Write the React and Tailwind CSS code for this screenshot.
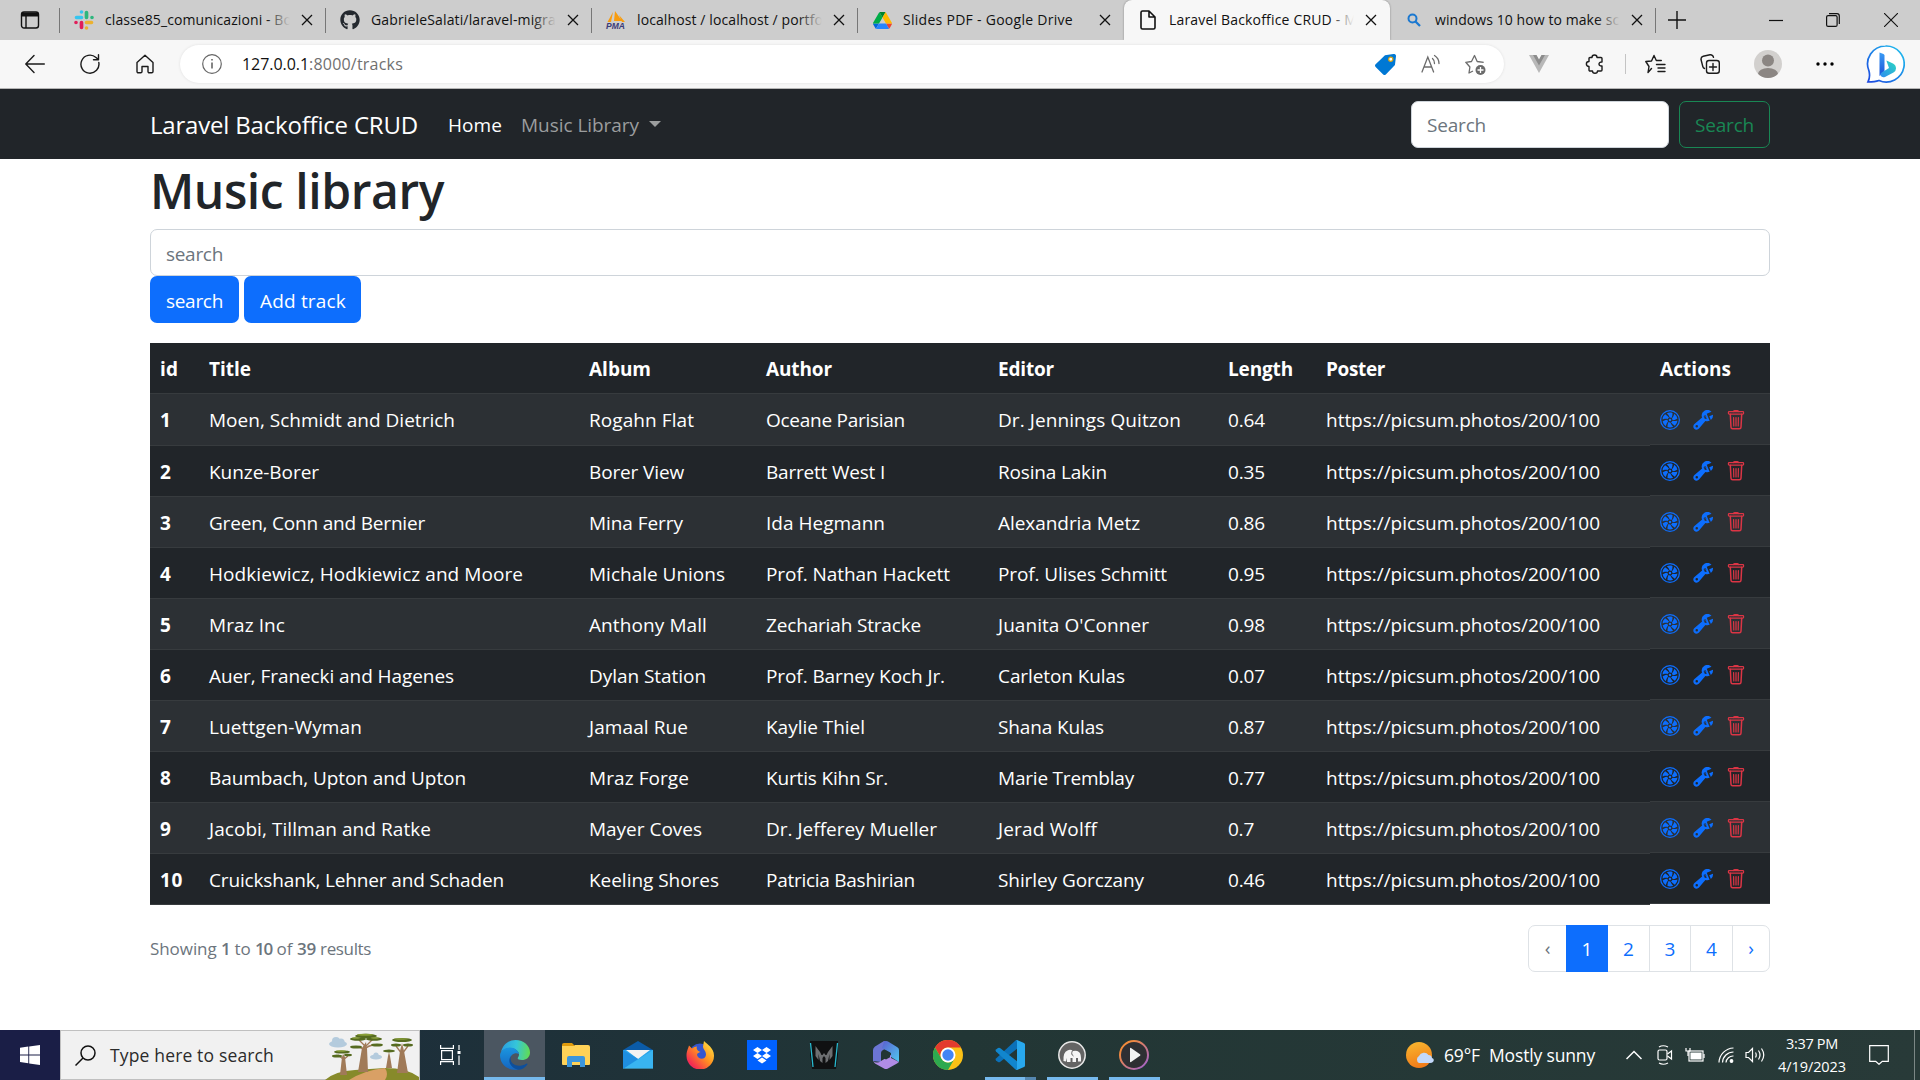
import React, { useLayoutEffect, useRef, useState } from "react";
import { BsFan, BsWrenchAdjustable } from "react-icons/bs";
import { FaGithub } from "react-icons/fa";

/* Text set to a given advance width by adjusting its tracking. */
function Fit({ w, className = "", children }) {
  const ref = useRef(null);
  const [ls, setLs] = useState(0);
  useLayoutEffect(() => {
    const n = ref.current.textContent.length;
    setLs((w - ref.current.getBoundingClientRect().width) / n);
  }, [w]);
  return (
    <span ref={ref} className={"inline-block whitespace-pre shrink-0 " + className} style={{ letterSpacing: ls + "px" }}>
      {children}
    </span>
  );
}

const Close = ({ className = "" }) => (
  <svg viewBox="0 0 12 12" className={"size-3 shrink-0 " + className} fill="none" stroke="#111" strokeWidth="1.3">
    <path d="M1 1l10 10M11 1L1 11" />
  </svg>
);

const Slack = () => (
  <svg viewBox="0 0 24 24" className="size-5">
    <g strokeWidth="4.4" strokeLinecap="round" fill="none">
      <path d="M9 2.4v0M3 9h6" stroke="#36c5f0" />
      <path d="M15 3v6M21.6 9v0" stroke="#2eb67d" />
      <path d="M15 15h6M15 21.6v0" stroke="#ecb22e" />
      <path d="M9 15v6M2.4 15v0" stroke="#e01e5a" />
    </g>
  </svg>
);
const Pma = () => (
  <svg viewBox="0 0 20 20" className="size-5 overflow-visible">
    <path d="M7 2L5 12H1.5zM9 1l7 10H8zM13 5l6 7h-3z" fill="#f89c0e" />
    <text x="0" y="18.5" fontSize="8.5" fontWeight="bold" fontStyle="italic" fontFamily="Liberation Sans, sans-serif" fill="#3b3b78">PMA</text>
  </svg>
);
const Drive = () => (
  <svg viewBox="0 0 87.3 78" className="w-[19px] h-[17px]">
    <path d="m6.6 66.85 3.85 6.65c.8 1.4 1.95 2.5 3.3 3.3l13.75-23.8h-27.5c0 1.55.4 3.1 1.2 4.5z" fill="#0066da" />
    <path d="m43.65 25-13.75-23.8c-1.35.8-2.5 1.9-3.3 3.3l-25.4 44a9.06 9.06 0 0 0 -1.2 4.5h27.5z" fill="#00ac47" />
    <path d="m73.55 76.8c1.35-.8 2.5-1.9 3.3-3.3l1.6-2.75 7.65-13.25c.8-1.4 1.2-2.95 1.2-4.5h-27.5l5.85 11.5z" fill="#ea4335" />
    <path d="m43.65 25 13.75-23.8c-1.35-.8-2.9-1.2-4.5-1.2h-18.5c-1.6 0-3.15.45-4.5 1.2z" fill="#00832d" />
    <path d="m59.8 53h-32.3l-13.75 23.8c1.35.8 2.9 1.2 4.5 1.2h50.8c1.6 0 3.15-.45 4.5-1.2z" fill="#2684fc" />
    <path d="m73.4 26.5-12.7-22c-.8-1.4-1.95-2.5-3.3-3.3l-13.75 23.8 16.15 28h27.45c0-1.55-.4-3.1-1.2-4.5z" fill="#ffba00" />
  </svg>
);
const Page = () => (
  <svg viewBox="0 0 16 20" className="w-4 h-5" fill="none" stroke="#111" strokeWidth="1.6" strokeLinejoin="round">
    <path d="M3 1h6l6 6v10.5a1.5 1.5 0 0 1-1.5 1.5H2.5A1.5 1.5 0 0 1 1 17.500V2.500A1.500 1.500 0 0 1 2.500 1zM9 1v6h6" />
  </svg>
);
const Magnifier = () => (
  <svg viewBox="0 0 14 14" className="size-3.5" fill="none" stroke="#1b78d0" strokeWidth="2">
    <circle cx="5.500" cy="5.500" r="4" />
    <path d="M8.500 8.500l4.500 4.500" strokeWidth="2.300" />
  </svg>
);

const tabs = [
  { icon: <Slack />, text: "classe85_comunicazioni - Bo", w: 187, fade: true, sep: true },
  { icon: <FaGithub className="size-5 text-[#24292f]" />, text: "GabrieleSalati/laravel-migrat", w: 190, fade: true, sep: true },
  { icon: <Pma />, text: "localhost / localhost / portfo", w: 186, fade: true, sep: true },
  { icon: <Drive />, text: "Slides PDF - Google Drive", w: 170, sep: false },
  { icon: <Page />, text: "Laravel Backoffice CRUD - M", w: 188, fade: true, active: true },
  { icon: <Magnifier />, text: "windows 10 how to make scr", w: 190, fade: true, sep: true },
];

function TabStrip() {
  return (
    <div className="flex h-10 bg-[#cdcdcd]">
      <div className="flex w-[60px] items-center justify-end">
        <svg viewBox="0 0 20 20" className="mr-[19px] size-5 shrink-0" fill="none" stroke="#111" strokeWidth="1.400">
          <rect x="1.500" y="2" width="17" height="16" rx="2.500" />
          <path d="M2 4.500h16" strokeWidth="4" />
          <path d="M6 6v12" />
        </svg>
        <span className="h-[25px] w-px bg-[#777]" />
      </div>
      {tabs.map((t) => (
        <div
          key={t.text}
          className={
            "flex w-[266px] shrink-0 items-center " +
            (t.active ? "rounded-t-lg bg-[#f7f7f7] shadow-[0_0_2px_rgba(0,0,0,0.4)]" : "")
          }
        >
          <span className="ml-3 flex w-6 shrink-0 justify-center">{t.icon}</span>
          <span className="relative ml-[9px] w-[185px] shrink-0 overflow-hidden text-sm text-[#111]">
            <Fit w={t.w}>{t.text}</Fit>
            {t.fade && (
              <span
                className={
                  "absolute inset-y-0 right-0 w-6 bg-linear-to-r " +
                  (t.active ? "from-[#f7f7f7]/0 to-[#f7f7f7]" : "from-[#cdcdcd]/0 to-[#cdcdcd]")
                }
              />
            )}
          </span>
          <Close className="ml-[11px]" />
          {t.sep && <span className="ml-auto h-[25px] w-px bg-[#777]" />}
        </div>
      ))}
      <svg viewBox="0 0 18 18" className="ml-3 mt-[11px] size-[18px]" fill="none" stroke="#111" strokeWidth="1.400">
        <path d="M9 0v18M0 9h18" />
      </svg>
      <div className="ml-auto flex items-center">
        <svg viewBox="0 0 14 14" className="mr-[43px] size-3.5" stroke="#111" strokeWidth="1.200"><path d="M0 7.500h14" /></svg>
        <svg viewBox="0 0 14 14" className="mr-[44px] size-3.5" fill="none" stroke="#111" strokeWidth="1.200">
          <rect x=".6" y="2.600" width="10.500" height="10.800" rx="1.500" />
          <path d="M3 .6h8a2.300 2.300 0 0 1 2.300 2.300v8" />
        </svg>
        <svg viewBox="0 0 14 14" className="mr-[22px] size-3.5" stroke="#111" strokeWidth="1.100"><path d="M0 0l14 14M14 0L0 14" /></svg>
      </div>
    </div>
  );
}

function Toolbar() {
  const s = { fill: "none", stroke: "#1b1b1b", strokeWidth: 1.4, strokeLinejoin: "round", strokeLinecap: "round" };
  return (
    <div className="flex h-[49px] items-center border-b border-[#b5b5b5] bg-[#f7f7f7]">
      <svg viewBox="0 0 20 20" className="ml-[25px] size-5" {...s}><path d="M19.300 10H1M9 1.500L.8 10 9 18.500" /></svg>
      <svg viewBox="0 0 20 20" className="ml-[35px] size-5" {...s}><path d="M18.800 8.500A9 9 0 1 1 16 3.500L18.300 5.600M18.500 .8v5h-5" /></svg>
      <svg viewBox="0 0 18 20" className="ml-9 h-5 w-[18px]" {...s}>
        <path d="M1 8.500L9 1.200l8 7.300v9a1.300 1.300 0 0 1-1.300 1.300h-2.400A1.300 1.300 0 0 1 12 17.500v-5H6v5a1.300 1.300 0 0 1-1.300 1.300H2.300A1.300 1.300 0 0 1 1 17.500z" />
      </svg>
      <div className="ml-[26px] flex h-[38px] w-[1324px] items-center rounded-full bg-white shadow-[0_0_3px_rgba(0,0,0,0.1)]">
        <svg viewBox="0 0 20 20" className="ml-[22px] size-5" fill="none" stroke="#666" strokeWidth="1.200">
          <circle cx="10" cy="10" r="9.300" /><path d="M10 8.500v6M10 5v1.600" strokeWidth="1.600" />
        </svg>
        <span className="ml-5 flex text-base leading-none text-[#707070]">
          <Fit w={67} className="text-[#111]">127.0.0.1</Fit>
          <Fit w={94}>:8000/tracks</Fit>
        </span>
        <svg viewBox="0 0 20 20" className="ml-auto size-[21px]">
          <path d="M9.500 1.200L17.500 0A2 2 0 0 1 20 2.200L19 10.500 10.300 19.500a1.800 1.800 0 0 1-2.500 0L.6 12.300a1.800 1.800 0 0 1 0-2.500z" fill="#0078d4" />
          <circle cx="15" cy="5" r="2" fill="#fff" stroke="#d9a514" strokeWidth="1.200" />
        </svg>
        <svg viewBox="0 0 20 20" className="ml-[25px] size-5" fill="none" stroke="#6b6b6b" strokeWidth="1.300" strokeLinecap="round">
          <path d="M1 18L6.800 3l5.800 15M3 13h7.700M11.500 4.500a6 6 0 0 1 2 5M13.500 1.500a9.500 9.500 0 0 1 4.500 8" />
        </svg>
        <svg viewBox="0 0 21 21" className="ml-6 mr-[18px] size-[21px]" fill="none" stroke="#6b6b6b" strokeWidth="1.300" strokeLinejoin="round">
          <path d="M8 17l-4 2 .9-6L.8 8.300l5.700-.8L9.500 1.500l2.700 6 6.500.9" />
          <circle cx="15.500" cy="16" r="5" fill="#6b6b6b" stroke="none" /><path d="M15.500 13v6M12.500 16h6" stroke="#fff" />
        </svg>
      </div>
      <svg viewBox="0 0 20 18" className="ml-[25px] h-[18px] w-5"><path d="M0 0h7l3 5 3-5h7L10 18z" fill="#b8b8b8" /><path d="M4 0h3.500L10 4.500 12.500 0H16l-6 10.500z" fill="#8c8c8c" /></svg>
      <svg viewBox="0 0 20 20" className="ml-9 size-5" {...s}>
        <path d="M7 3.500a2.500 2.500 0 0 1 5 0H16a1 1 0 0 1 1 1V8c-4-.5-4 4.500 0 4v4a1 1 0 0 1-1 1h-3.500c0 3-5 3-5 0H5a1 1 0 0 1-1-1v-3.500c-3.500 0-3.500-5 0-5V4.500a1 1 0 0 1 1-1z" />
      </svg>
      <span className="ml-5 h-5 w-px bg-[#c4c4c4]" />
      <svg viewBox="0 0 21 20" className="ml-[19px] h-5 w-[21px]" {...s}>
        <path d="M6.500 14.500L3 18.500l1-6L.8 7.500 6.500 7 9 1.500l2.300 5h5M11.500 10.500h8.500M13 14h7M13 17.500h7" />
      </svg>
      <svg viewBox="0 0 20 20" className="ml-[34px] size-5" {...s}>
        <rect x="6.500" y="6.500" width="12.800" height="12.800" rx="2.500" /><path d="M13 9.500v7M9.500 13h7M4.500 14.500A3 3 0 0 1 2.800 12.500L1 5.500A3 3 0 0 1 3.200 2.300L10 .8a3 3 0 0 1 3.500 2.500" />
      </svg>
      <svg viewBox="0 0 28 28" className="ml-[34px] size-7">
        <clipPath id="av"><circle cx="14" cy="14" r="14" /></clipPath>
        <circle cx="14" cy="14" r="14" fill="#d2d0ce" /><g fill="#8b8683" clipPath="url(#av)"><circle cx="14" cy="10.500" r="6" /><ellipse cx="14" cy="24" rx="10" ry="6" /></g>
      </svg>
      <svg viewBox="0 0 18 4" className="ml-[34px] h-1 w-[18px]"><circle cx="2" cy="2" r="1.700" /><circle cx="9" cy="2" r="1.700" /><circle cx="16" cy="2" r="1.700" /></svg>
      <svg viewBox="0 0 40 40" className="ml-[31px] size-10">
        <defs>
          <linearGradient id="bi" x1="1" y1="0" x2="0" y2="1"><stop offset="0" stopColor="#20c5ee" /><stop offset="1" stopColor="#1b46e0" /></linearGradient>
          <linearGradient id="bs" x1="0" y1="0" x2="0" y2="1"><stop offset="0" stopColor="#3a9cf5" /><stop offset="1" stopColor="#1b52d8" /></linearGradient>
          <linearGradient id="bt" x1="1" y1="0" x2="0" y2="1"><stop offset="0" stopColor="#2ad8c0" /><stop offset="1" stopColor="#2f8cf0" /></linearGradient>
        </defs>
        <path d="M20.500 2a18 18 0 1 1-6.500 34.500Q10 38 3 38 5.500 33 4 27A18 18 0 0 1 20.500 2z" fill="#fff" stroke="url(#bi)" strokeWidth="1.700" />
        <path d="M14.500 8.500l4 1.500q1 .5 1 1.500V27l-5 5z" fill="url(#bs)" />
        <path d="M21.500 16.500l6.500 3q3 1.500 3 5 0 2.500-2.500 4L20 33q-3 1-4.500-1.500Q15 30 16 29l8-5-2.500-7z" fill="url(#bt)" />
      </svg>
    </div>
  );
}

function Navbar() {
  return (
    <div className="flex h-[70px] items-center bg-[#212529] px-[150px] text-[19px]">
      <Fit w={268} className="pt-0.5 text-[24px] text-white">Laravel Backoffice CRUD</Fit>
      <Fit w={54} className="ml-[30px] pt-0.5 text-white">Home</Fit>
      <Fit w={118} className="ml-[19px] pt-0.5 text-[#9b9d9e]">Music Library</Fit>
      <span className="ml-[10px] border-x-[6px] border-t-[6px] border-x-transparent border-t-[#9b9d9e]" />
      <div className="ml-auto flex h-[47px] w-[258px] items-center rounded-[7px] border border-[#ced4da] bg-white pl-[15px] text-[#6c757d]">
        <Fit w={59} className="pt-0.5">Search</Fit>
      </div>
      <div className="ml-[10px] flex h-[47px] w-[91px] items-center rounded-[7px] border border-[#198754] pl-[15px] text-[#198754]">
        <Fit w={59} className="pt-0.5">Search</Fit>
      </div>
    </div>
  );
}

const head = [["id", 18], ["Title", 42], ["Album", 62], ["Author", 66], ["Editor", 56], ["Length", 65], ["Poster", 59]];
const rows = [
  [["Moen, Schmidt and Dietrich", 246], ["Rogahn Flat", 105], ["Oceane Parisian", 139], ["Dr. Jennings Quitzon", 183], "0.64"],
  [["Kunze-Borer", 110], ["Borer View", 95], ["Barrett West I", 119], ["Rosina Lakin", 109], "0.35"],
  [["Green, Conn and Bernier", 216], ["Mina Ferry", 94], ["Ida Hegmann", 119], ["Alexandria Metz", 142], "0.86"],
  [["Hodkiewicz, Hodkiewicz and Moore", 314], ["Michale Unions", 136], ["Prof. Nathan Hackett", 184], ["Prof. Ulises Schmitt", 169], "0.95"],
  [["Mraz Inc", 76], ["Anthony Mall", 118], ["Zechariah Stracke", 155], ["Juanita O'Conner", 151], "0.98"],
  [["Auer, Franecki and Hagenes", 245], ["Dylan Station", 117], ["Prof. Barney Koch Jr.", 179], ["Carleton Kulas", 127], "0.07"],
  [["Luettgen-Wyman", 153], ["Jamaal Rue", 99], ["Kaylie Thiel", 99], ["Shana Kulas", 106], "0.87"],
  [["Baumbach, Upton and Upton", 257], ["Mraz Forge", 100], ["Kurtis Kihn Sr.", 122], ["Marie Tremblay", 136], "0.77"],
  [["Jacobi, Tillman and Ratke", 222], ["Mayer Coves", 113], ["Dr. Jefferey Mueller", 171], ["Jerad Wolff", 99], "0.7"],
  [["Cruickshank, Lehner and Schaden", 295], ["Keeling Shores", 130], ["Patricia Bashirian", 149], ["Shirley Gorczany", 146], "0.46"],
];
const cols = "grid grid-cols-[49px_380px_177px_232px_230px_98px_334px] items-center justify-items-start border-b border-[#373b3e] pt-0.5 *:ml-[10px]";

/* Waste bin with a wide lid and three slats. */
const Bin = () => (
  <svg viewBox="0 0 20 20" className="ml-[13px] size-5" fill="none" stroke="#dc3545" strokeLinejoin="round" strokeLinecap="round">
    <path d="M7.500 1.600Q7.500.6 8.500.6h3q1 0 1 1" strokeWidth="1.200" />
    <rect x="2.400" y="1.700" width="15.200" height="2.400" rx=".8" strokeWidth="1.200" />
    <path d="M4.300 4.300l.7 13q.1 1.500 1.600 1.500h6.800q1.500 0 1.600-1.500l.7-13" strokeWidth="1.500" />
    <path d="M7.600 7.500l.2 8.500M10 7.500V16M12.400 7.500l-.2 8.500" strokeWidth="1.200" />
  </svg>
);

function TrackTable() {
  return (
    <div className="mt-5 flex text-[19px] text-white">
      <div>
        <div className={cols + " h-[51px] bg-[#212529] font-bold"}>
          {head.map(([t, w]) => <Fit key={t} w={w}>{t}</Fit>)}
        </div>
        {rows.map((r, i) => (
          <div key={i} className={cols + (i === 0 ? " h-[52px]" : " h-[51px]") + (i % 2 ? " bg-[#212529]" : " bg-[#2c3034]")}>
            <Fit w={i === 9 ? 23 : 11.5} className="font-bold">{i + 1}</Fit>
            {r.slice(0, 4).map(([t, w]) => <Fit key={t} w={w}>{t}</Fit>)}
            <Fit w={r[4] === "0.7" ? 26 : 37}>{r[4]}</Fit>
            <Fit w={274}>https://picsum.photos/200/100</Fit>
          </div>
        ))}
      </div>
      <div className="w-[120px]">
        <div className="flex h-[51px] items-center border-b border-[#373b3e] bg-[#212529] pl-[10px] pt-0.5 font-bold">
          <Fit w={71}>Actions</Fit>
        </div>
        {rows.map((r, i) => (
          <div key={i} className={"flex h-[51px] items-center border-b border-[#373b3e] pl-[10px] pt-px text-[#0d6efd]" + (i % 2 ? " bg-[#212529]" : " bg-[#2c3034]")}>
            <BsFan className="size-5" />
            <BsWrenchAdjustable className="ml-[13px] size-5" />
            <Bin />
          </div>
        ))}
      </div>
    </div>
  );
}

function Pagination() {
  const cell = "flex h-full items-center justify-center border-r border-[#dee2e6] ";
  return (
    <div className="mt-5 flex items-center justify-between text-[19px] text-[#0d6efd]">
      <span className="flex text-[17px] text-[#6c757d]">
        <Fit w={71}>Showing </Fit><Fit w={9} className="font-semibold">1</Fit><Fit w={25}> to </Fit>
        <Fit w={17} className="font-semibold">10</Fit><Fit w={25}> of </Fit><Fit w={19} className="font-semibold">39</Fit><Fit w={55}> results</Fit>
      </span>
      <div className="flex h-[47px] rounded-[7px] border border-[#dee2e6]">
        <span className={cell + "w-[37px] border-r-0 text-[#6c757d]"}>‹</span>
        <span className="-my-px flex w-[42px] items-center justify-center bg-[#0d6efd] pt-px text-white">1</span>
        <span className={cell + "w-[42px] pt-px"}>2</span>
        <span className={cell + "w-[41px] pt-px"}>3</span>
        <span className={cell + "w-[42px] pt-px"}>4</span>
        <span className="flex w-[36px] items-center justify-center">›</span>
      </div>
    </div>
  );
}

const Baobabs = () => (
  <svg viewBox="0 0 94 48" className="h-12 w-[94px]">
    <g fill="#b4cbdd"><ellipse cx="13" cy="12" rx="9" ry="3.500" /><circle cx="11" cy="9" r="4" /><circle cx="16" cy="10" r="3.500" /><ellipse cx="51" cy="25" rx="6" ry="2.500" /><circle cx="51" cy="23" r="2.600" /></g>
    <path d="M0 48Q10 39 30 38L60 36Q82 36 94 45V48z" fill="#878a2a" />
    <path d="M24 48Q40 38 60 36Q64 42 60 48z" fill="#d9a065" />
    <g fill="#a07a58"><path d="M33 40l4-24 4-6 1 6 1 24zM15 43l2-18 1-3 2 3 2 18zM72 41l3-22 2-8 2 8 4 22zM61 36l2-12 1-4 1 4 2 12z" /></g>
    <g stroke="#a07a58" strokeWidth="1.300" fill="none"><path d="M39 19q-1-4-8-4M40 18q2-5 11-5M40 14l-6-6M41 14l7-7M18 27l-5-4M18 28l5-4M77 22l-6-8M77 22l6-8" /></g>
    <g fill="#566b20"><ellipse cx="41" cy="4" rx="11" ry="2.200" /><ellipse cx="33" cy="7" rx="8" ry="1.800" /><ellipse cx="49" cy="7" rx="8" ry="1.800" /><ellipse cx="31" cy="15" rx="6" ry="1.600" /><ellipse cx="52" cy="13" rx="6" ry="1.600" /><ellipse cx="17" cy="20" rx="8" ry="1.600" /><ellipse cx="12" cy="24" rx="5" ry="1.500" /><ellipse cx="23" cy="23" rx="4" ry="1.300" /><ellipse cx="77" cy="8" rx="10" ry="2" /><ellipse cx="71" cy="13" rx="5" ry="1.500" /><ellipse cx="83" cy="13" rx="5" ry="1.500" /><ellipse cx="64" cy="19" rx="6" ry="1.500" /></g>
    <g fill="#8aa038"><ellipse cx="40" cy="2.800" rx="8" ry="1" /><ellipse cx="31" cy="6" rx="4" ry=".8" /><ellipse cx="50" cy="6" rx="4" ry=".8" /><ellipse cx="16" cy="19" rx="5" ry=".8" /><ellipse cx="76" cy="7" rx="7" ry=".8" /></g>
  </svg>
);

const EdgeIcon = () => (
  <svg viewBox="0 0 30 30" className="size-[30px]">
    <defs>
      <linearGradient id="e1" x1="0" y1=".5" x2="1" y2=".6"><stop offset="0" stopColor="#2a9fe0" /><stop offset=".5" stopColor="#35c5da" /><stop offset="1" stopColor="#62dd50" /></linearGradient>
      <linearGradient id="e2" x1="0" y1="0" x2="0" y2="1"><stop offset="0" stopColor="#1b96e0" /><stop offset="1" stopColor="#1565c0" /></linearGradient>
    </defs>
    <path d="M1 12C3 4.500 8.500 0 15.500 0 24 0 30 6 30 12.500c0 5-4 7.500-8 7.500-3.500 0-5-1.200-4-2.500 3-4-1-9-7-9.500C7 8 3 9.500 1 12z" fill="url(#e1)" />
    <path d="M0 15C.5 10.500 5 7.500 10 7.500c5 0 8.500 3.500 9 6.500-4-2-9 1-9 6 0 4.500 4 8.500 9 9.500C8 31 0 25 0 15z" fill="url(#e2)" />
    <path d="M11 16c-2 6 3 10.500 9.500 9.800 3-.4 5-1.600 6.300-2.300q1 0 .6 1C25 28 21 30 18 29.800 10.500 28 7 21 11 16z" fill="#0e4f9c" />
  </svg>
);
const Explorer = () => (
  <svg viewBox="0 0 28 24" className="h-6 w-7"><path d="M0 2a2 2 0 0 1 2-2h8l3 3H0z" fill="#e09b0c" /><path d="M0 3h12l1-1h13a2 2 0 0 1 2 2v17a1 1 0 0 1-1 1H1a1 1 0 0 1-1-1z" fill="#ffd257" /><path d="M5 24v-9a2 2 0 0 1 2-2h14a2 2 0 0 1 2 2v9h-5v-5h-8v5z" fill="#3c96dc" /></svg>
);
const Mail = () => (
  <svg viewBox="0 0 30 28" className="h-7 w-[30px]"><path d="M0 9L15 0l15 9z" fill="#0b5ba8" /><path d="M0 9h30v18H0z" fill="#28a4ea" /><path d="M3 9h24L15 18z" fill="#f2f2f2" /><path d="M0 9l15 9-15 10z" fill="#1f8ee0" /><path d="M30 9L0 28h30z" fill="#45c0f5" opacity=".6" /></svg>
);
const Firefox = () => (
  <svg viewBox="0 0 28 28" className="size-7">
    <defs><linearGradient id="ff" x1="1" y1="0" x2="0" y2="1"><stop offset="0" stopColor="#fff04a" /><stop offset=".45" stopColor="#ff9320" /><stop offset=".8" stopColor="#f4304f" /><stop offset="1" stopColor="#e0127e" /></linearGradient></defs>
    <circle cx="14" cy="13" r="10.500" fill="#3456d0" />
    <path d="M18 0c3 3 10 7 10 14.500A13.500 13.500 0 0 1 .5 15C.5 10 2 8 3 4.500l3 3q2-2 5-2c-1 2 0 4 3.500 5.500-2 1-3.500 1-3.500 3 1 5 9 5 9-.5 0-4-3-5-3-8z" fill="url(#ff)" />
  </svg>
);
const Dropbox = () => (
  <svg viewBox="0 0 30 30" className="size-[30px]"><rect width="30" height="30" fill="#0061fe" /><path d="M10.500 7l4.500 3-4.500 3L6 10zM19.500 7l4.500 3-4.500 3-4.500-3zM10.500 13l4.500 3-4.500 3L6 16zM19.500 13l4.500 3-4.500 3-4.500-3zM15 17.500l4.500 3-4.500 3-4.500-3z" fill="#fff" /></svg>
);
const Predator = () => (
  <svg viewBox="0 0 30 30" className="size-[30px]"><path d="M1 1h28v14l-2 14H3L1 15z" fill="#101112" /><path d="M1.500 3L4 27M28.500 3L26 27" stroke="#27b9cf" strokeWidth="1.300" /><path d="M6.500 6l4.500 6 1.500 3h1L15 13l1.500 2h1L19 12l4.500-6v10l-3 4V14l-1.500 7-2.500 2v-5l-1.500-2-1.500 2v5L11 21l-1.500-7v6l-3-4z" fill="#6d6f71" /></svg>
);
const M365 = () => (
  <svg viewBox="0 0 26 28" className="h-7 w-[26px]">
    <defs><linearGradient id="m3" x1="0" y1="0" x2="1" y2="1"><stop offset="0" stopColor="#5a5fd0" /><stop offset="1" stopColor="#50c8f0" /></linearGradient></defs>
    <path d="M11 0L2 5.500Q0 7 0 9v11l8 1V12q0-2 2-3l5-3V1z" fill="#6b75d4" />
    <path d="M11 .5q2-1 4 0L24 6q2 1 2 3v12l-8-5v-4L9 7z" fill="url(#m3)" />
    <path d="M0 20q4 3 8 0l10-6v3l8 4-2 1.500-9 5q-2 1-4 0L2 22.500z" fill="#b08ce6" />
    <path d="M13 9.500l4 2.300v4.500l-4 2.300-4-2.300v-4.500z" fill="#223635" />
  </svg>
);
const Chrome = () => (
  <svg viewBox="0 0 30 30" className="size-[30px]"><circle cx="15" cy="15" r="15" fill="#fbc116" /><path d="M2 7.500A15 15 0 0 1 28 7.500H15A7.500 7.500 0 0 0 8.500 18.800z" fill="#e33b2e" /><path d="M2 7.500A15 15 0 0 0 15 30l6.500-11.300A7.500 7.500 0 0 1 8.500 18.800z" fill="#2da94f" /><circle cx="15" cy="15" r="7.500" fill="#fff" /><circle cx="15" cy="15" r="5.700" fill="#4285f4" /></svg>
);
const VsCode = () => (
  <svg viewBox="0 0 30 30" className="size-[30px]">
    <path d="M22 0l-1.500.5L1 18.500q-1 1 0 2l2 1.500q1 .6 2 0L23 8z" fill="#0b70b8" />
    <path d="M22 30l-1.500-.5L1 11.500q-1-1 0-2L3 8q1-.6 2 0l18 14z" fill="#1186ce" />
    <path d="M22 0l7 3q1 .5 1 1.500v21q0 1-1 1.500l-7 3q-1 0-1.500-.7 1.500.7 1.500-1V1.700q0-1.700-1.500-1z" fill="#28a8ee" />
  </svg>
);
const Mamp = () => (
  <svg viewBox="0 0 28 28" className="size-7">
    <circle cx="14" cy="14" r="13.200" fill="#646464" stroke="#e8e8e8" strokeWidth="1.500" />
    <path d="M5.500 20Q5 11 9.500 9.500q3-1.500 5.500.5 3.500-1 6 1 2.500 2 2 9.500h-3V17h-2v4h-3.500v-4h-2v4H9v-4l-1 3.500z" fill="#f6f6f6" />
    <path d="M14.500 9.500q-2 4 1 5.500" stroke="#646464" fill="none" />
  </svg>
);
const Media = () => (
  <svg viewBox="0 0 30 30" className="size-[30px]"><defs><linearGradient id="mp" x1="0" y1="0" x2="1" y2="1"><stop offset=".2" stopColor="#f28a3c" /><stop offset="1" stopColor="#9a5fd6" /></linearGradient></defs><circle cx="15" cy="15" r="14" fill="#2e2f33" stroke="url(#mp)" strokeWidth="2" /><path d="M11 8.500q0-1 1-.5l9 6.200q1 .8 0 1.600l-9 6.200q-1 .5-1-.5z" fill="#f2f2f2" /></svg>
);

const apps = [
  { icon: <Explorer />, bar: "" }, { icon: <Mail />, bar: "" }, { icon: <Firefox />, bar: "" }, { icon: <Dropbox />, bar: "" },
  { icon: <Predator />, bar: "" }, { icon: <M365 />, bar: "" }, { icon: <Chrome />, bar: "" },
  { icon: <VsCode />, bar: "split" }, { icon: <Mamp />, bar: "full" }, { icon: <Media />, bar: "full" },
];

function Taskbar() {
  const s = { fill: "none", stroke: "#fff", strokeWidth: 1.2 };
  return (
    <div className="mt-auto flex h-[50px] items-center bg-linear-to-r from-[#1a2a3e] via-[#223635] to-[#283a38] text-white">
      <div className="flex h-full w-[60px] items-center justify-center bg-[#1a1e46]">
        <svg viewBox="0 0 20 20" className="size-5" fill="#fff"><path d="M0 2.800L8.300 1.600v7.900H0zM9.200 1.500L20 0v9.500H9.200zM0 10.400h8.300v7.900L0 17.100zM9.200 10.400H20V20L9.200 18.500z" /></svg>
      </div>
      <div className="flex h-full w-[360px] items-center border border-[#c0c0c0] bg-[#f1f1f1]">
        <svg viewBox="0 0 21 21" className="ml-3.5 size-[21px]" fill="none" stroke="#111" strokeWidth="1.500"><circle cx="13" cy="8" r="7" /><path d="M8 13L.5 20.500" /></svg>
        <Fit w={164} className="ml-[14px] text-[17.500px] text-[#2b2b2b]">Type here to search</Fit>
        <span className="ml-auto mt-0.5"><Baobabs /></span>
      </div>
      <div className="flex h-full w-16 items-center justify-center">
        <svg viewBox="0 0 21 20" className="mr-1 h-5 w-[21px]" {...s} strokeWidth="1.200"><path d="M.6 0v3.400h12.800V0M.6 20v-3.400h12.800V20M1.600 5.600h10.800v9H1.600zM19 0v5M19 10.500V20" /><path d="M17.500 6h3v3h-3z" fill="#fff" stroke="none" /></svg>
      </div>
      <div className="flex h-full w-[61px] flex-col items-center bg-[#4b5661]">
        <span className="mt-[10px]"><EdgeIcon /></span>
        <span className="mt-auto h-[3px] w-full bg-[#76b9ed]" />
      </div>
      {apps.map((a, i) => (
        <div key={i} className="flex h-full w-[62px] flex-col items-center">
          <span className="flex h-[50px] items-center">{a.icon}</span>
          {a.bar === "full" && <span className="-mt-[3px] h-[3px] w-[51px] shrink-0 bg-[#76b9ed]" />}
          {a.bar === "split" && <span className="-mt-[3px] h-[3px] w-[51px] shrink-0 border-r-[11px] border-[#5587b0] bg-[#76b9ed]" />}
        </div>
      ))}
      <svg viewBox="0 0 28 28" className="ml-auto size-7">
        <defs><linearGradient id="sn" x1=".3" y1="0" x2=".6" y2="1"><stop offset="0" stopColor="#f9b42e" /><stop offset="1" stopColor="#f07818" /></linearGradient></defs>
        <circle cx="13" cy="14" r="13" fill="url(#sn)" /><path d="M13 22a4 4 0 0 1 0-7 5.500 5.500 0 0 1 9.500-1q3 0 3.500 3 3 1 1 4-1 1-3 1z" fill="#c3d8fa" />
      </svg>
      <Fit w={36} className="ml-[10px] text-[17.500px]">69°F</Fit>
      <Fit w={106} className="ml-[9px] text-[17.500px]">Mostly sunny</Fit>
      <svg viewBox="0 0 16 10" className="ml-[31px] h-[10px] w-4" {...s} strokeWidth="1.500"><path d="M.5 9L8 1.500 15.500 9" /></svg>
      <svg viewBox="0 0 16 20" className="ml-[15px] h-5 w-4" {...s}><rect x="1" y="5" width="9" height="10" rx="1.500" /><path d="M10.500 9l4-3v8l-4-3M2 2q4-2.500 9 0M2 18q4 2.500 9 0" /></svg>
      <svg viewBox="0 0 20 14" className="ml-3 h-3.5 w-5" {...s}><rect x="4" y="3" width="14" height="10" /><path d="M6 5h10v6H6z" fill="#fff" /><path d="M19 6v4M1 0v3h4V0M3 3v5" /></svg>
      <svg viewBox="0 0 16 16" className="ml-[13px] size-4" {...s}><path d="M1 15.500A15 15 0 0 1 15.500 1M4.500 15.500a11 11 0 0 1 11-10.500M8 15.500A7 7 0 0 1 15.500 9" /><circle cx="13.500" cy="14" r="1.300" fill="#fff" /></svg>
      <svg viewBox="0 0 20 16" className="ml-[11px] h-4 w-5" {...s}><path d="M1 5.500h2.500L7.500 1.500v13L3.500 10.500H1zM10.500 5.500q1.500 2.500 0 5M13.500 3.500q3 4.500 0 9M16.500 1.500q4.500 6.500 0 13" /></svg>
      <div className="ml-[13px] flex w-[68px] flex-col items-center text-[14.500px] leading-[23px]">
        <Fit w={52}>3:37 PM</Fit>
        <Fit w={68}>4/19/2023</Fit>
      </div>
      <svg viewBox="0 0 20 20" className="ml-[23px] size-5" {...s}><path d="M.7.7h18.600v15.600h-6L10 19.300l-3.300-3H.7z" /></svg>
      <span className="ml-[25px] mr-[5px] h-full w-px bg-[#7b8785]" />
    </div>
  );
}

export default function App() {
  return (
    <div className="flex h-[1080px] w-[1920px] flex-col overflow-hidden bg-white font-['Open_Sans','Noto_Sans',sans-serif]">
      <TabStrip />
      <Toolbar />
      <Navbar />
      <main className="mx-[150px] text-[19px]">
        <h1 className="mt-0.5 flex h-[60px] items-center text-[48px] font-[550] leading-[60px] text-[#212529]"><Fit w={294}>Music library</Fit></h1>
        <div className="mt-2 flex h-[47px] items-center rounded-[7px] border border-[#ced4da] pl-[15px] pt-[3px] text-[#6c757d]"><Fit w={57}>search</Fit></div>
        <div className="flex gap-[5px] text-white">
          <span className="flex h-[47px] w-[89px] items-center rounded-[7px] bg-[#0d6efd] pl-4 pt-[3px]"><Fit w={57}>search</Fit></span>
          <span className="flex h-[47px] w-[117px] items-center rounded-[7px] bg-[#0d6efd] pl-4 pt-[3px]"><Fit w={86}>Add track</Fit></span>
        </div>
        <TrackTable />
        <Pagination />
      </main>
      <Taskbar />
    </div>
  );
}
